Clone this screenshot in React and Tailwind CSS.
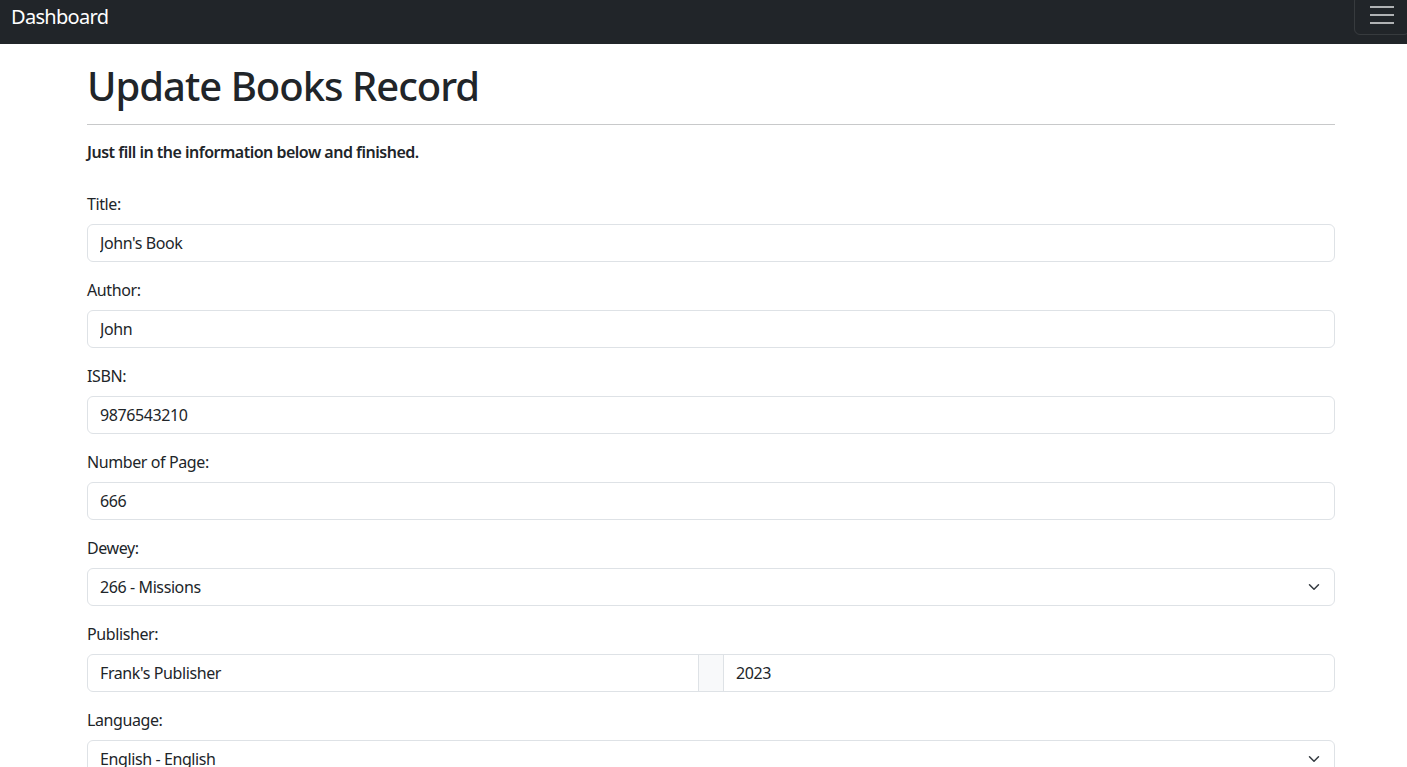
import React from "react";

const Chevron = () => (
  <svg
    className="absolute right-[12px] top-1/2 -translate-y-1/2 w-4 h-3"
    viewBox="0 0 16 16"
    fill="none"
    stroke="#343a40"
    strokeWidth="2"
    strokeLinecap="round"
    strokeLinejoin="round"
  >
    <path d="m2 5 6 6 6-6" />
  </svg>
);

const Field = ({ label, children }) => (
  <div className="mb-4">
    <label className="block mb-2 text-[16px] leading-6">{label}</label>
    {children}
  </div>
);

const TextInput = ({ value, className = "" }) => (
  <input
    type="text"
    defaultValue={value}
    className={
      "block w-full h-[38px] px-3 text-[16px] tracking-[-0.4px] text-[#212529] bg-white border border-[#dee2e6] rounded-[6px] outline-none " +
      className
    }
  />
);

const SelectBox = ({ value }) => (
  <div className="relative h-[38px] w-full border border-[#dee2e6] rounded-[6px] bg-white flex items-center px-3 text-[16px]">
    <span>{value}</span>
    <Chevron />
  </div>
);

export default function App() {
  return (
    <div
      className="min-h-screen bg-white text-[#212529] tracking-[-0.4px]"
      style={{ fontFamily: "'Noto Sans', 'Open Sans', sans-serif" }}
    >
      {/* Navbar */}
      <nav className="h-[44px] bg-[#212529] flex items-start justify-between pl-[11px] overflow-hidden">
        <span className="text-white text-[20px] leading-[34px] tracking-[-0.7px]">Dashboard</span>
        <button className="-mt-[5px] -mr-[3px] w-[56px] h-[40px] border border-white/10 rounded-[6px] flex flex-col items-center justify-center gap-[6px]">
          <span className="block w-6 h-[2px] bg-[#b0b2b4]" />
          <span className="block w-6 h-[2px] bg-[#b0b2b4]" />
          <span className="block w-6 h-[2px] bg-[#b0b2b4]" />
        </button>
      </nav>

      <div className="pl-[87px] pr-[72px]">
        <h1 className="mt-[18px] text-[40px] leading-[48px] font-medium tracking-[-1px]">
          Update Books Record
        </h1>
        <hr className="mt-[14px] border-0 border-t border-[#c8c9ca]" />
        <p className="mt-[15px] text-[16px] leading-6 font-semibold tracking-[-0.5px]">
          Just fill in the information below and finished.
        </p>

        <form className="mt-[28px]">
          <Field label="Title:">
            <TextInput value="John's Book" />
          </Field>
          <Field label="Author:">
            <TextInput value="John" />
          </Field>
          <Field label="ISBN:">
            <TextInput value="9876543210" />
          </Field>
          <Field label="Number of Page:">
            <TextInput value="666" />
          </Field>
          <Field label="Dewey:">
            <SelectBox value="266 - Missions" />
          </Field>
          <Field label="Publisher:">
            <div className="flex w-full h-[38px]">
              <input
                type="text"
                defaultValue="Frank's Publisher"
                className="flex-1 min-w-0 h-full px-3 text-[16px] tracking-[-0.4px] border border-[#dee2e6] rounded-l-[6px] outline-none"
              />
              <span className="w-[26px] h-full bg-[#f8f9fa] border border-[#dee2e6] -mx-px" />
              <input
                type="text"
                defaultValue="2023"
                className="flex-1 min-w-0 h-full px-3 text-[16px] tracking-[-0.4px] border border-[#dee2e6] rounded-r-[6px] outline-none"
              />
            </div>
          </Field>
          <Field label="Language:">
            <SelectBox value="English - English" />
          </Field>
        </form>
      </div>
    </div>
  );
}
